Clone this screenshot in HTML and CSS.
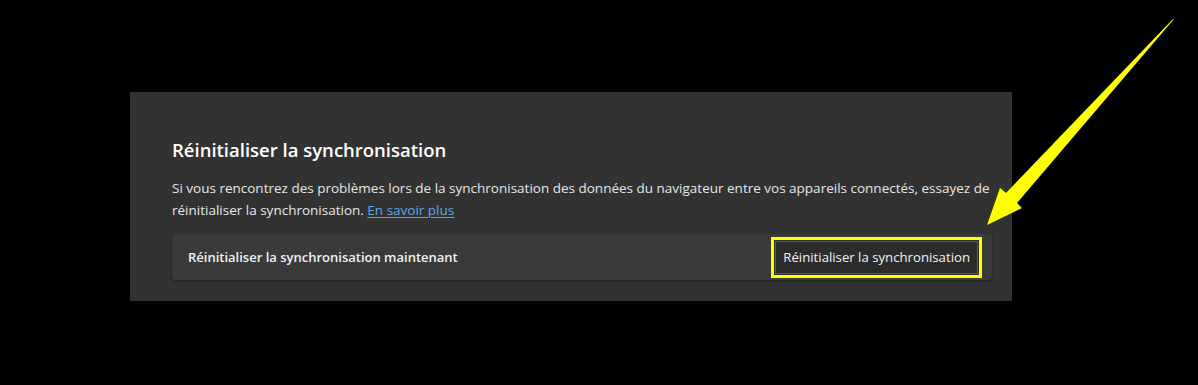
FILE: index.html
```html
<!DOCTYPE html>
<html lang="fr">
<head>
  <meta charset="UTF-8">
  <meta name="viewport" content="width=device-width, initial-scale=1.0">
  <title>Réinitialiser la synchronisation</title>
  <link rel="stylesheet" href="styles.css">
</head>
<body>
  <div class="panel">
    <h2 class="panel-title">Réinitialiser la synchronisation</h2>
    <p class="panel-text">
      Si vous rencontrez des problèmes lors de la synchronisation des données du navigateur entre vos appareils connectés, essayez de
      réinitialiser la synchronisation. <a href="#" class="link">En savoir plus</a>
    </p>

    <!-- Row with the reset action -->
    <div class="card">
      <span class="card-label">Réinitialiser la synchronisation maintenant</span>
      <button type="button" class="btn">Réinitialiser la synchronisation</button>
    </div>
  </div>

  <!-- Yellow annotation arrow pointing at the button -->
  <svg class="arrow" width="1198" height="385" viewBox="0 0 1198 385">
    <polygon points="1174,19 1017,203 1022,208 987,225 1000,188 1006,193 1172,20" fill="#ffff00"/>
  </svg>
</body>
</html>
```

FILE: styles.css
```css
body {
  margin: 0;
  background-color: #000;
  font-family: "Open Sans", "Noto Sans", Arial, sans-serif;
  width: 1198px;
  height: 385px;
  overflow: hidden;
}

.panel {
  box-sizing: border-box;
  width: 882px;
  height: 209px;
  margin: 92px 0 0 130px;
  padding: 44px 20px 0 42px;
  background-color: #323232;
}

.panel-title {
  margin: 0;
  font-size: 18.5px;
  font-weight: 600;
  line-height: 28px;
  color: #fff;
}

.panel-text {
  margin: 13px 0 13px;
  font-size: 13.5px;
  line-height: 22px;
  color: #e6e6e6;
}

.link {
  color: #5fa8e6;
  text-decoration: underline;
  text-underline-offset: 2px;
}

.card {
  display: flex;
  align-items: center;
  justify-content: space-between;
  height: 46px;
  padding: 0 14px 0 16px;
  background-color: #3a3a3a;
  border-radius: 4px;
  box-shadow: 0 1px 3px rgba(0,0,0,0.45);
}

.card-label {
  font-size: 13px;
  font-weight: 600;
  color: #f2f2f2;
}

.btn {
  height: 33px;
  padding: 0 7px;
  font-family: inherit;
  font-size: 13.2px;
  color: #f2f2f2;
  background-color: #2c2c2c;
  border: 1px solid #5c5c5c;
  border-radius: 0;
  box-shadow: 0 0 0 1px #2c2c2c, 0 0 0 4px #ffff00;
}

.arrow {
  position: absolute;
  top: 0;
  left: 0;
  pointer-events: none;
}
```
